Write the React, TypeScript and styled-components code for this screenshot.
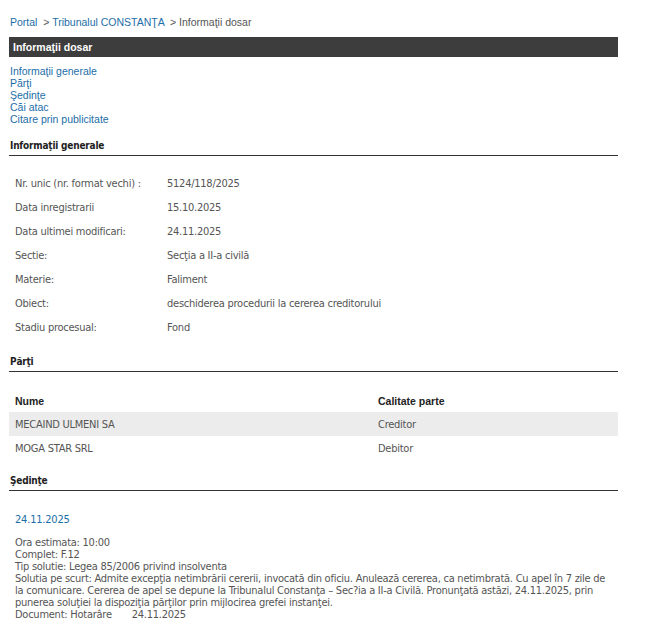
import styled, { createGlobalStyle } from 'styled-components';

const GlobalStyle = createGlobalStyle`
  body {
    margin: 0;
    background: #ffffff;
    font-family: "Liberation Sans", Arial, sans-serif;
  }
`;

const Page = styled.div`
  width: 609px;
  padding: 15px 0 0 9px;
`;

const Breadcrumb = styled.div`
  font-size: 10.5px;
  line-height: 14px;
  color: #555;
  padding-left: 1px;
  margin-bottom: 8px;
  a {
    color: #1c6ea8;
    text-decoration: none;
  }
`;

const TitleBar = styled.h1`
  margin: 0;
  height: 20px;
  line-height: 20px;
  padding: 0 4px;
  background-color: #3d3d3d;
  color: #ffffff;
  font-size: 10.5px;
  font-weight: bold;
`;

const AnchorList = styled.ul`
  list-style: none;
  margin: 8px 0 0;
  padding: 0 0 0 1px;
  li {
    font-size: 10.5px;
    line-height: 12px;
  }
  a {
    color: #1c6ea8;
    text-decoration: none;
  }
`;

const SectionTitle = styled.h2<{ $top: number }>`
  margin: ${(p) => p.$top}px 0 0;
  padding: 0 0 3px 1px;
  border-bottom: 1px solid #333;
  font-family: "DejaVu Sans Condensed", Tahoma, sans-serif;
  font-size: 10px;
  line-height: 13px;
  letter-spacing: -0.2px;
  font-weight: bold;
  color: #222;
`;

const InfoTable = styled.dl`
  margin: 16px 0 0;
  display: grid;
  grid-template-columns: 152px 1fr;
  grid-auto-rows: 24px;
  padding-left: 6px;
  font-family: "DejaVu Sans Condensed", Tahoma, sans-serif;
  font-size: 11px;
  letter-spacing: -0.25px;
  color: #555;
  dt,
  dd {
    margin: 0;
    line-height: 24px;
  }
`;

const PartsTable = styled.table`
  width: 100%;
  margin-top: 17px;
  border-collapse: collapse;
  th {
    text-align: left;
    font-size: 10.5px;
    font-weight: bold;
    color: #222;
    height: 23px;
    padding: 0 6px;
    vertical-align: middle;
  }
`;

const PartRow = styled.tr<{ $shaded: boolean }>`
  background-color: ${(p) => (p.$shaded ? '#ececec' : 'transparent')};
  td {
    height: 24px;
    padding: 0 6px;
    font-family: "DejaVu Sans Condensed", Tahoma, sans-serif;
    font-size: 11px;
    letter-spacing: -0.25px;
    color: #555;
  }
`;

const Hearing = styled.div`
  padding: 21px 6px 0 6px;
  font-family: "DejaVu Sans Condensed", Tahoma, sans-serif;
  font-size: 11px;
  letter-spacing: -0.25px;
  line-height: 12px;
  color: #555;
`;

const HearingDate = styled.div`
  color: #1c6ea8;
  font-size: 11px;
  letter-spacing: -0.2px;
  line-height: 16px;
  margin-bottom: 9px;
`;

const Gap = styled.span`
  display: inline-block;
  width: 20px;
`;

const info: [string, string][] = [
  ['Nr. unic (nr. format vechi) :', '5124/118/2025'],
  ['Data inregistrarii', '15.10.2025'],
  ['Data ultimei modificari:', '24.11.2025'],
  ['Sectie:', 'Secţia a II-a civilă'],
  ['Materie:', 'Faliment'],
  ['Obiect:', 'deschiderea procedurii la cererea creditorului'],
  ['Stadiu procesual:', 'Fond'],
];

const parts = [
  { name: 'MECAIND ULMENI SA', role: 'Creditor' },
  { name: 'MOGA STAR SRL', role: 'Debitor' },
];

const App = () => {
  return (
    <>
      <GlobalStyle />
      <Page>
        <Breadcrumb>
          <a href="#">Portal</a> &nbsp;&gt; <a href="#">Tribunalul CONSTANŢA</a> &nbsp;&gt; Informaţii dosar
        </Breadcrumb>
        <TitleBar>Informaţii dosar</TitleBar>
        <AnchorList>
          <li><a href="#">Informaţii generale</a></li>
          <li><a href="#">Părţi</a></li>
          <li><a href="#">Şedinţe</a></li>
          <li><a href="#">Căi atac</a></li>
          <li><a href="#">Citare prin publicitate</a></li>
        </AnchorList>

        <SectionTitle $top={14}>Informaţii generale</SectionTitle>
        <InfoTable>
          {info.map(([label, value]) => (
            <>
              <dt key={label}>{label}</dt>
              <dd>{value}</dd>
            </>
          ))}
        </InfoTable>

        <SectionTitle $top={15}>Părţi</SectionTitle>
        <PartsTable>
          <thead>
            <tr>
              <th style={{ width: 351 }}>Nume</th>
              <th>Calitate parte</th>
            </tr>
          </thead>
          <tbody>
            {parts.map((p, i) => (
              <PartRow key={p.name} $shaded={i % 2 === 0}>
                <td>{p.name}</td>
                <td>{p.role}</td>
              </PartRow>
            ))}
          </tbody>
        </PartsTable>

        <SectionTitle $top={14}>Şedinţe</SectionTitle>
        <Hearing>
          <HearingDate>24.11.2025</HearingDate>
          <div>Ora estimata: 10:00</div>
          <div>Complet: F.12</div>
          <div>Tip solutie: Legea 85/2006 privind insolventa</div>
          <div>
            Solutia pe scurt: Admite excepţia netimbrării cererii, invocată din oficiu. Anulează cererea, ca
            netimbrată. Cu apel în 7 zile de la comunicare. Cererea de apel se depune la Tribunalul Constanţa –
            Sec?ia a II-a Civilă. Pronunţată astăzi, 24.11.2025, prin punerea soluţiei la dispoziţia părţilor prin
            mijlocirea grefei instanţei.
          </div>
          <div>
            Document: Hotarâre<Gap />24.11.2025
          </div>
        </Hearing>
      </Page>
    </>
  );
};

export default App;
